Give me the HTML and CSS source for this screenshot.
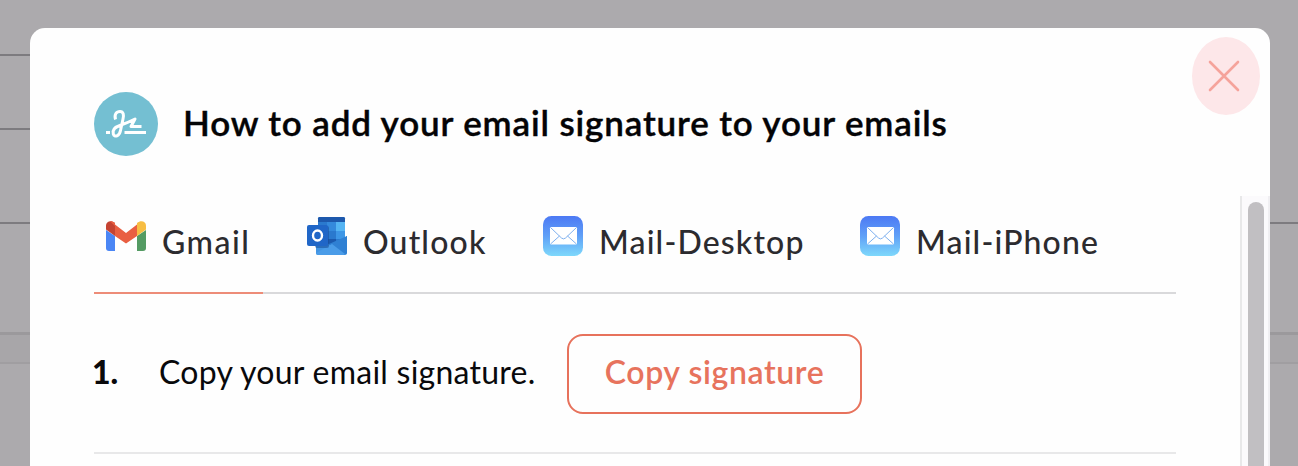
FILE: index.html
```html
<!DOCTYPE html>
<html lang="en">

<head>
  <meta charset="UTF-8">
  <meta name="viewport" content="width=device-width, initial-scale=1.0">
  <title>Add your email signature</title>
  <link rel="stylesheet" href="styles.css">
</head>

<body>

  <div class="page">
    <div class="page-side">
      <div class="line first"></div>
      <div class="line second"></div>
      <div class="line third"></div>
      <div class="band"></div>
    </div>
    <div class="page-side">
      <div class="line full"></div>
      <div class="band"></div>
    </div>
  </div>

  <div class="modal">
    <div class="modal-header">
      <svg class="logo" viewBox="0 0 64 64">
        <circle cx="32" cy="32" r="32" fill="#74bfd2" />
        <g fill="none" stroke="#fff" stroke-width="3" stroke-linejoin="round">
          <path d="M21.500 27.500C20 22.500 22.500 19.400 26 19.400C29.500 19.400 30 23 29 27L26.500 38.500C25.500 44 20.500 46 19.300 42C18 37.500 22.500 34.500 27 33C32 31.300 37 29 41 27L37 34.500H47.500" />
          <path d="M12 40.500h4M30.500 40.500H52" />
        </g>
      </svg>
      <h1>How to add your email signature to your emails</h1>
      <button class="close" aria-label="Close">
        <svg width="32" height="32" viewBox="0 0 32 32">
          <path d="M2 2L30 30M30 2L2 30" stroke="#f5a39b" stroke-width="2.6" stroke-linecap="round" />
        </svg>
      </button>
    </div>

    <div class="modal-body">
      <div class="content">
        <div class="tabs">
          <div class="tab active">
            <svg width="40" height="30" viewBox="0 0 40 30">
              <path d="M0 9L9 15V30H3Q0 30 0 27Z" fill="#4a86f5" />
              <path d="M40 9L31 15V30H37Q40 30 40 27Z" fill="#549b63" />
              <path d="M0 8.500V4.500C0 .5 5 -1.500 9 2V15Z" fill="#c54332" />
              <path d="M40 8.500V4.500C40 .5 35 -1.500 31 2V15Z" fill="#f7bd42" />
              <path d="M9 3.500L20 12L31 3.500V15L20 22.500L9 15Z" fill="#e95f42" />
              <path d="M4 .3Q7 0 9 2V5Z" fill="#e95f42" />
            </svg>
            <span>Gmail</span>
          </div>
          <div class="tab outlook">
            <svg width="40" height="38" viewBox="0 0 40 38">
              <rect x="11" width="27" height="30" rx="1.500" fill="#2a79ce" />
              <path d="M11 5V1.500Q11 0 12.500 0H36.500Q38 0 38 1.500V5Z" fill="#1d58ac" />
              <path d="M20 5h9v9h-9z" fill="#3489dc" />
              <path d="M29 5h9v9h-9z" fill="#54b4f3" />
              <path d="M29 14h9v8h-9z" fill="#3d96e6" />
              <path d="M20 22h9v8h-9z" fill="#1b59ae" />
              <path d="M9 19L25 29L40 19V35.500Q40 38 37.500 38H11.500Q9 38 9 35.500Z" fill="#4294e2" />
              <path d="M40 19V36Q39 38 37 37.500L22 27Z" fill="#2f80d3" />
              <path d="M9 36L25 27L38 37Q37 38 36 38H11Q9 38 9 36Z" fill="#4a9ce8" />
              <rect x="8" y="9" width="14" height="22" rx="2" fill="#174c98" opacity=".55" />
              <rect y="8" width="21" height="21" rx="2" fill="#2066c7" />
              <ellipse cx="10.500" cy="18.500" rx="4.500" ry="5" fill="none" stroke="#fff" stroke-width="2.400" />
            </svg>
            <span>Outlook</span>
          </div>
          <div class="tab desktop">
            <svg width="40" height="40" viewBox="0 0 40 40">
              <defs>
                <linearGradient id="sky" x2="0" y2="1">
                  <stop offset="0" stop-color="#4c79f4" />
                  <stop offset=".5" stop-color="#60a0f7" />
                  <stop offset="1" stop-color="#7ed8fb" />
                </linearGradient>
              </defs>
              <rect width="40" height="40" rx="8.500" fill="url(#sky)" />
              <rect x="7" y="11" width="27" height="17.500" rx="1.200" fill="#fff" />
              <path d="M7.500 11.500L18.500 22Q20.500 23.800 22.500 22L33.500 11.500M7.500 28L16.500 20M33.500 28L24.500 20" fill="none" stroke="#7eb0ef" stroke-width="1" />
            </svg>
            <span>Mail-Desktop</span>
          </div>
          <div class="tab iphone">
            <svg width="40" height="40" viewBox="0 0 40 40">
              <rect width="40" height="40" rx="8.500" fill="url(#sky)" />
              <rect x="7" y="11" width="27" height="17.500" rx="1.200" fill="#fff" />
              <path d="M7.500 11.500L18.500 22Q20.500 23.800 22.500 22L33.500 11.500M7.500 28L16.500 20M33.500 28L24.500 20" fill="none" stroke="#7eb0ef" stroke-width="1" />
            </svg>
            <span>Mail-iPhone</span>
          </div>
        </div>

        <div class="step">
          <span class="number">1.</span>
          <span class="step-text">Copy your email signature.</span>
          <button class="copy"><span>Copy signature</span></button>
        </div>
      </div>

      <div class="scrollbar">
        <div class="thumb"></div>
      </div>
    </div>
  </div>

</body>

</html>
```
FILE: styles.css
```css
* {
  box-sizing: border-box;
  margin: 0;
  padding: 0;
}

html,
body {
  height: 100%;
  overflow: hidden;
}

body {
  font-family: Lato, "Open Sans", sans-serif;
  background-color: #acaaad;
}

span,
h1 {
  white-space: nowrap;
}

svg {
  display: block;
  flex: none;
}

/* dimmed page behind the modal */
.page {
  height: 100%;
  display: flex;
  justify-content: space-between;
}

.page-side {
  width: 30px;
}

.line {
  border-bottom: 2px solid #7d7b7f;
}

.line.first {
  height: 56px;
}

.line.second {
  height: 74px;
}

.line.third {
  height: 94px;
}

.line.full {
  height: 224px;
}

.band {
  height: 32px;
  margin-top: 108px;
  background-color: #a8a6a9;
  border-top: 3px solid #9b999c;
  border-bottom: 2px solid #a09ea1;
}

.modal {
  position: absolute;
  top: 28px;
  left: 30px;
  width: 1240px;
  height: 438px;
  display: flex;
  flex-direction: column;
  background-color: #fefefe;
  border-radius: 15px 15px 0 0;
  overflow: hidden;
}

.modal-header {
  height: 168px;
  padding: 9px 10px 0 64px;
  display: flex;
  flex: none;
  align-items: flex-start;
}

.logo {
  width: 64px;
  height: 64px;
  margin-top: 55px;
}

h1 {
  margin: 63px 0 0 25px;
  font-size: 35px;
  line-height: 44px;
  font-weight: 600;
  letter-spacing: 0.86px;
  -webkit-text-stroke: 0.4px #040406;
  color: #040406;
}

.close {
  width: 68px;
  height: 78px;
  margin-left: auto;
  padding-right: 4px;
  display: flex;
  justify-content: center;
  align-items: center;
  border: none;
  border-radius: 50%;
  background-color: #fde7e9;
}

.modal-body {
  flex: 1;
  min-height: 0;
  display: flex;
}

.content {
  width: 1210px;
  padding: 0 64px;
}

.tabs {
  height: 98px;
  display: flex;
  border-bottom: 2px solid #d9d9db;
}

.tab {
  height: 98px;
  padding: 20px 14px 0 12px;
  display: flex;
  align-items: flex-start;
  font-size: 32px;
  line-height: 40px;
  font-weight: 500;
  letter-spacing: 1.15px;
  color: #2c2b2f;
}

.tab span {
  margin: 6px 0 0 16px;
}

.tab.active {
  width: 169px;
  letter-spacing: 1.5px;
  border-bottom: 2px solid #ed8c78;
}

.tab.active svg {
  margin-top: 5px;
}

.tab.outlook {
  width: 237px;
  padding-left: 44px;
}

.tab.outlook svg {
  margin-top: 1px;
}

.tab.desktop {
  width: 317px;
  padding-left: 43px;
}

.tab.iphone {
  padding-left: 43px;
}

.step {
  height: 160px;
  display: flex;
  align-items: center;
  border-bottom: 2px solid #e8e8e9;
  font-size: 32px;
  line-height: 40px;
  color: #09090b;
}

.number {
  width: 67px;
  margin-left: -2px;
  font-weight: 900;
}

.number,
.step-text {
  padding-bottom: 2px;
}

.step-text {
  width: 408px;
  letter-spacing: 0.25px;
}

.copy {
  width: 295px;
  height: 80px;
  margin-top: 2px;
  padding-bottom: 4px;
  border: 2px solid #e7725c;
  border-radius: 16px;
  background: none;
  font: inherit;
  font-weight: 600;
  letter-spacing: 0.6px;
  color: #e7735d;
}

.scrollbar {
  width: 30px;
  padding: 6px 4px 0 6px;
  background-color: #fbfafc;
  border-left: 2px solid #e8e8e9;
  border-right: 2px solid #f0eff2;
}

.thumb {
  width: 16px;
  height: 264px;
  border-radius: 8px 8px 0 0;
  background-color: #c1bfc2;
}
```
